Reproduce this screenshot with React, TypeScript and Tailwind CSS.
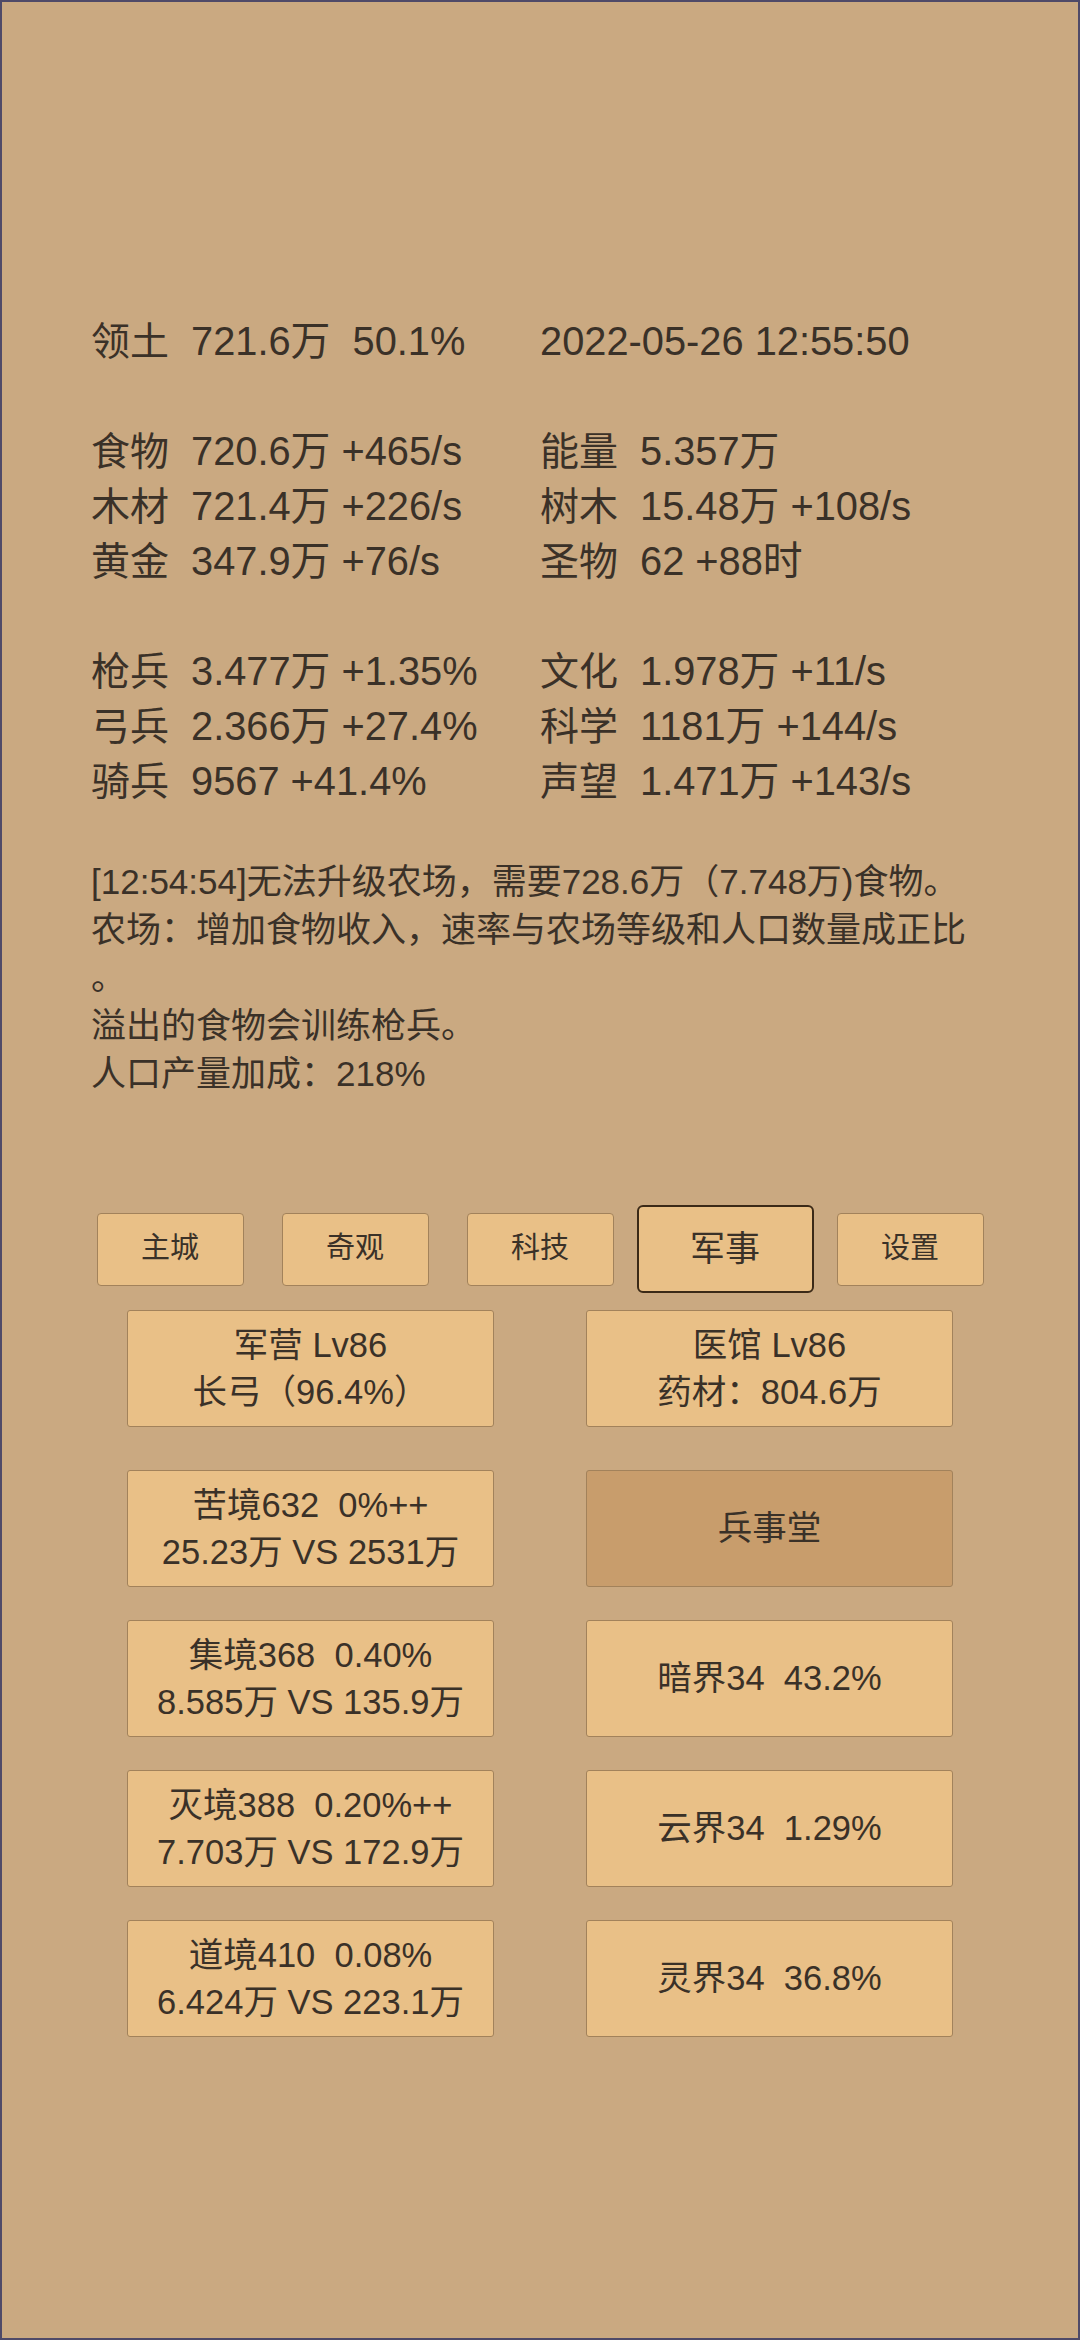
import React from 'react';

type Stat = { label: string; value: string };

const statRows: ([Stat, Stat] | null)[] = [
  [
    { label: '领土', value: '721.6万  50.1%' },
    { label: '', value: '2022-05-26 12:55:50' },
  ],
  null,
  [
    { label: '食物', value: '720.6万 +465/s' },
    { label: '能量', value: '5.357万' },
  ],
  [
    { label: '木材', value: '721.4万 +226/s' },
    { label: '树木', value: '15.48万 +108/s' },
  ],
  [
    { label: '黄金', value: '347.9万 +76/s' },
    { label: '圣物', value: '62 +88时' },
  ],
  null,
  [
    { label: '枪兵', value: '3.477万 +1.35%' },
    { label: '文化', value: '1.978万 +11/s' },
  ],
  [
    { label: '弓兵', value: '2.366万 +27.4%' },
    { label: '科学', value: '1181万 +144/s' },
  ],
  [
    { label: '骑兵', value: '9567 +41.4%' },
    { label: '声望', value: '1.471万 +143/s' },
  ],
];

// the game wraps the full stop of the 2nd line onto its own line
const messages = [
  '[12:54:54]无法升级农场，需要728.6万（7.748万)食物。',
  '农场：增加食物收入，速率与农场等级和人口数量成正比',
  '。',
  '溢出的食物会训练枪兵。',
  '人口产量加成：218%',
];

const tabs = ['主城', '奇观', '科技', '军事', '设置'];
const activeTab = '军事';

type Card = { lines: string[]; dim?: boolean };

const cardRows: [Card, Card][] = [
  [{ lines: ['军营 Lv86', '长弓（96.4%）'] }, { lines: ['医馆 Lv86', '药材：804.6万'] }],
  [{ lines: ['苦境632  0%++', '25.23万 VS 2531万'] }, { lines: ['兵事堂'], dim: true }],
  [{ lines: ['集境368  0.40%', '8.585万 VS 135.9万'] }, { lines: ['暗界34  43.2%'] }],
  [{ lines: ['灭境388  0.20%++', '7.703万 VS 172.9万'] }, { lines: ['云界34  1.29%'] }],
  [{ lines: ['道境410  0.08%', '6.424万 VS 223.1万'] }, { lines: ['灵界34  36.8%'] }],
];

function StatCell({ stat }: { stat: Stat }) {
  return (
    <div className="whitespace-pre">
      {stat.label && <span className="mr-[22px]">{stat.label}</span>}
      <span className="text-[39.8px]">{stat.value}</span>
    </div>
  );
}

function BuildingCard({ card }: { card: Card }) {
  return (
    <div
      className={`w-[367px] h-[117px] flex flex-col items-center justify-center rounded-[3px] border border-[#a2825b] text-[34.5px] leading-[47px] whitespace-pre ${
        card.dim ? 'bg-[#c89d6c]' : 'bg-[#e9c087]'
      }`}
    >
      {card.lines.map(line => (
        <div key={line}>{line}</div>
      ))}
    </div>
  );
}

export default function App() {
  return (
    <div className="w-[1080px] h-[2340px] overflow-hidden border-2 border-[#4f4a68] bg-[#caa981] text-[#3a3128] font-['Liberation_Sans','Noto_Sans_CJK_SC',sans-serif]">
      <div className="pt-[312px] px-[89px] text-[39px] leading-[55px]">
        {statRows.map((row, i) =>
          row ? (
            <div key={i} className="grid grid-cols-[449px_1fr]">
              <StatCell stat={row[0]} />
              <StatCell stat={row[1]} />
            </div>
          ) : (
            <div key={i} className="h-[55px]" />
          )
        )}
      </div>

      <div className="mt-[49px] px-[89px] text-[35px] leading-[48px]">
        {messages.map((m, i) => (
          <div key={i} className="whitespace-nowrap">
            {m}
          </div>
        ))}
      </div>

      <div className="mt-[107px] flex justify-center items-center h-[88px]">
        {tabs.map(t => (
          <div key={t} className="w-[185px] flex justify-center">
            {t === activeTab ? (
              <div className="w-[177px] h-[88px] flex items-center justify-center rounded-[6px] border-2 border-[#3b2a18] bg-[#e9c087] text-[35px]">
                {t}
              </div>
            ) : (
              <div className="w-[147px] h-[73px] flex items-center justify-center rounded-[4px] border border-[#a2825b] bg-[#e9c087] text-[29px]">
                {t}
              </div>
            )}
          </div>
        ))}
      </div>

      <div className="mt-[17px] flex flex-col items-center">
        {cardRows.map((row, i) => (
          <div key={i} className={`flex gap-x-[92px] ${i === 0 ? 'mb-[43px]' : 'mb-[33px]'}`}>
            <BuildingCard card={row[0]} />
            <BuildingCard card={row[1]} />
          </div>
        ))}
      </div>
    </div>
  );
}
